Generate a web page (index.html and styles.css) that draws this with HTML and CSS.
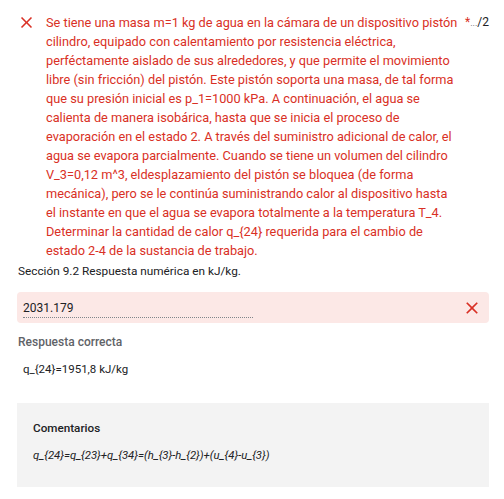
FILE: index.html
```html
<!DOCTYPE html>
<html lang="es">
<head>
<meta charset="utf-8">
<link rel="stylesheet" href="styles.css">
</head>
<body>
<div class="page">
  <div class="question">
    <svg class="qicon" viewBox="0 0 24 24" width="19" height="19"><path d="M19 6.41 17.59 5 12 10.59 6.41 5 5 6.41 10.59 12 5 17.59 6.41 19 12 13.41 17.59 19 19 17.59 13.41 12z" fill="#d93025"/></svg>
    <div class="qtext">Se tiene una masa m=1 kg de agua en la cámara de un dispositivo pistón<br>cilindro, equipado con calentamiento por resistencia eléctrica,<br>perféctamente aislado de sus alrededores, y que permite el movimiento<br>libre (sin fricción) del pistón. Este pistón soporta una masa, de tal forma<br>que su presión inicial es p_1=1000 kPa. A continuación, el agua se<br>calienta de manera isobárica, hasta que se inicia el proceso de<br>evaporación en el estado 2. A través del suministro adicional de calor, el<br>agua se evapora parcialmente. Cuando se tiene un volumen del cilindro<br>V_3=0,12 m^3, eldesplazamiento del pistón se bloquea (de forma<br>mecánica), pero se le continúa suministrando calor al dispositivo hasta<br>el instante en que el agua se evapora totalmente a la temperatura T_4.<br>Determinar la cantidad de calor q_{24} requerida para el cambio de<br>estado 2-4 de la sustancia de trabajo.</div>
    <div class="points"><span class="req">*</span><span class="dots">...</span>/2</div>
  </div>
  <div class="section">Sección 9.2 Respuesta numérica en kJ/kg.</div>
  <div class="answer">
    <span class="value">2031.179</span>
    <svg class="aicon" viewBox="0 0 24 24" width="20" height="20"><path d="M19 6.41 17.59 5 12 10.59 6.41 5 5 6.41 10.59 12 5 17.59 6.41 19 12 13.41 17.59 19 19 17.59 13.41 12z" fill="#d93025"/></svg>
  </div>
  <div class="correct-label">Respuesta correcta</div>
  <div class="correct-value">q_{24}=1951,8 kJ/kg</div>
  <div class="comments">
    <div class="comments-title">Comentarios</div>
    <div class="comments-body">q_{24}=q_{23}+q_{34}=(h_{3}-h_{2})+(u_{4}-u_{3})</div>
  </div>
</div>
</body>
</html>
```
FILE: styles.css
```css
html, body { margin: 0; padding: 0; background: #fff; }
body { font-family: Roboto, "Noto Sans", Arial, sans-serif; color: #202124; }
.page { padding: 0 15px 0 17px; }
.question { display: flex; align-items: flex-start; padding-top: 13px; }
.qicon { flex: none; margin: 0 10px 0 0; }
.qtext { flex: 1; min-width: 0; white-space: nowrap; font-size: 12.75px; line-height: 19px; color: #d93025; }
.points { flex: none; font-size: 12px; line-height: 19px; color: #202124; margin-left: 4px; }
.req { color: #d93025; }
.dots { color: #5f6368; font-size: 9px; }
.section { font-size: 11.8px; line-height: 19px; margin-top: 2px; padding-left: 1px; }
.answer { display: flex; align-items: center; justify-content: space-between; height: 31px; margin-top: 11px; background: #fce8e6; border-radius: 4px; padding: 0 7px 0 6px; }
.value { font-size: 12px; line-height: 17px; border-bottom: 1px dotted #80868b; width: 230px; padding-top: 2px; }
.correct-label { font-size: 12px; font-weight: 500; color: #5f6368; margin-top: 11px; padding-left: 1px; line-height: 17px; }
.correct-value { font-size: 11.5px; line-height: 17px; margin-top: 10px; padding-left: 6px; }
.comments { background: #f3f3f3; margin-top: 25px; padding: 17px 16px 23px; }
.comments-title { font-size: 11.7px; font-weight: 500; line-height: 17px; }
.comments-body { font-size: 11.3px; font-style: italic; line-height: 17px; margin-top: 10px; }
```
